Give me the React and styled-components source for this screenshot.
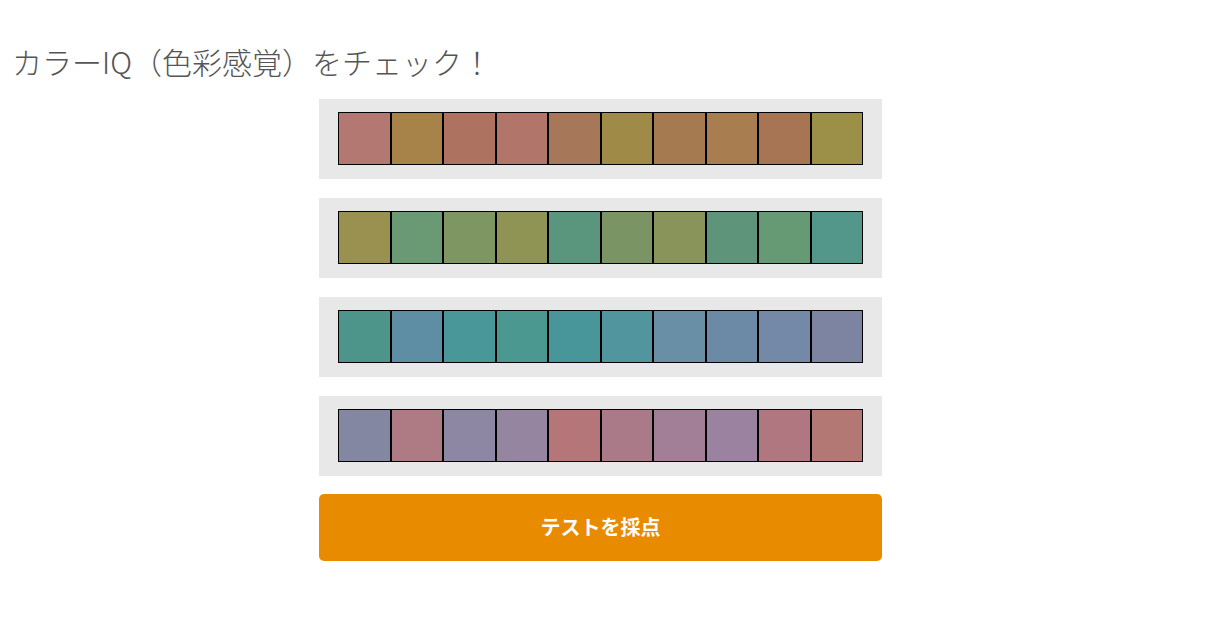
import React from "react";
import styled, { createGlobalStyle } from "styled-components";

const Global = createGlobalStyle`
  html, body { margin: 0; padding: 0; background: #ffffff; }
  body { font-family: "Noto Sans CJK JP", "Noto Sans", sans-serif; }
`;

const Page = styled.div`
  padding: 37px 0 56px 12px;
`;

const Title = styled.h1`
  margin: 0 0 14px 0;
  font-size: 30px;
  line-height: 48px;
  font-weight: 300;
  color: #555555;
  letter-spacing: 0;
`;

const Board = styled.div`
  width: 563px;
  margin-left: 307px;
  display: flex;
  flex-direction: column;
  gap: 19px;
`;

const Panel = styled.div`
  background: #e8e8e8;
  padding: 13px 19px 14px 19px;
`;

const Row = styled.div`
  display: grid;
  grid-template-columns: repeat(10, 1fr);
`;

const Chip = styled.div`
  height: 53px;
  box-sizing: border-box;
  border: 1px solid #000;
  background: ${(p) => p.$c};
`;

const Button = styled.button`
  height: 67px;
  margin-top: -1px;
  border: none;
  border-radius: 5px;
  background: #e98b00;
  color: #ffffff;
  font-family: "Noto Sans CJK JP", "Noto Sans", sans-serif;
  font-weight: 700;
  font-size: 20px;
  padding: 0 0 2px 0;
  cursor: pointer;
`;

const rows = [
  ["#b37872", "#a7834a", "#ad7360", "#b2756a", "#a67759", "#9f8a48", "#a67a51", "#a87e50", "#a77553", "#9c8f48"],
  ["#9a9150", "#6a9a73", "#7e9661", "#8f9455", "#5a957e", "#7a9563", "#889459", "#5e947a", "#659a74", "#53978a"],
  ["#4d958a", "#5e8ea3", "#4a979a", "#4b9890", "#48959a", "#51959e", "#688fa6", "#6c8aa5", "#7489a8", "#7d84a2"],
  ["#8487a2", "#ae7a84", "#8e87a3", "#9585a0", "#b47679", "#ab7a88", "#a27f96", "#9a82a0", "#b07780", "#b37873"],
];

export default function App() {
  return (
    <Page>
      <Global />
      <Title>カラーIQ（色彩感覚）をチェック！</Title>
      <Board>
        {rows.map((r, i) => (
          <Panel key={i}>
            <Row>
              {r.map((c, j) => (
                <Chip key={j} $c={c} />
              ))}
            </Row>
          </Panel>
        ))}
        <Button>テストを採点</Button>
      </Board>
    </Page>
  );
}
